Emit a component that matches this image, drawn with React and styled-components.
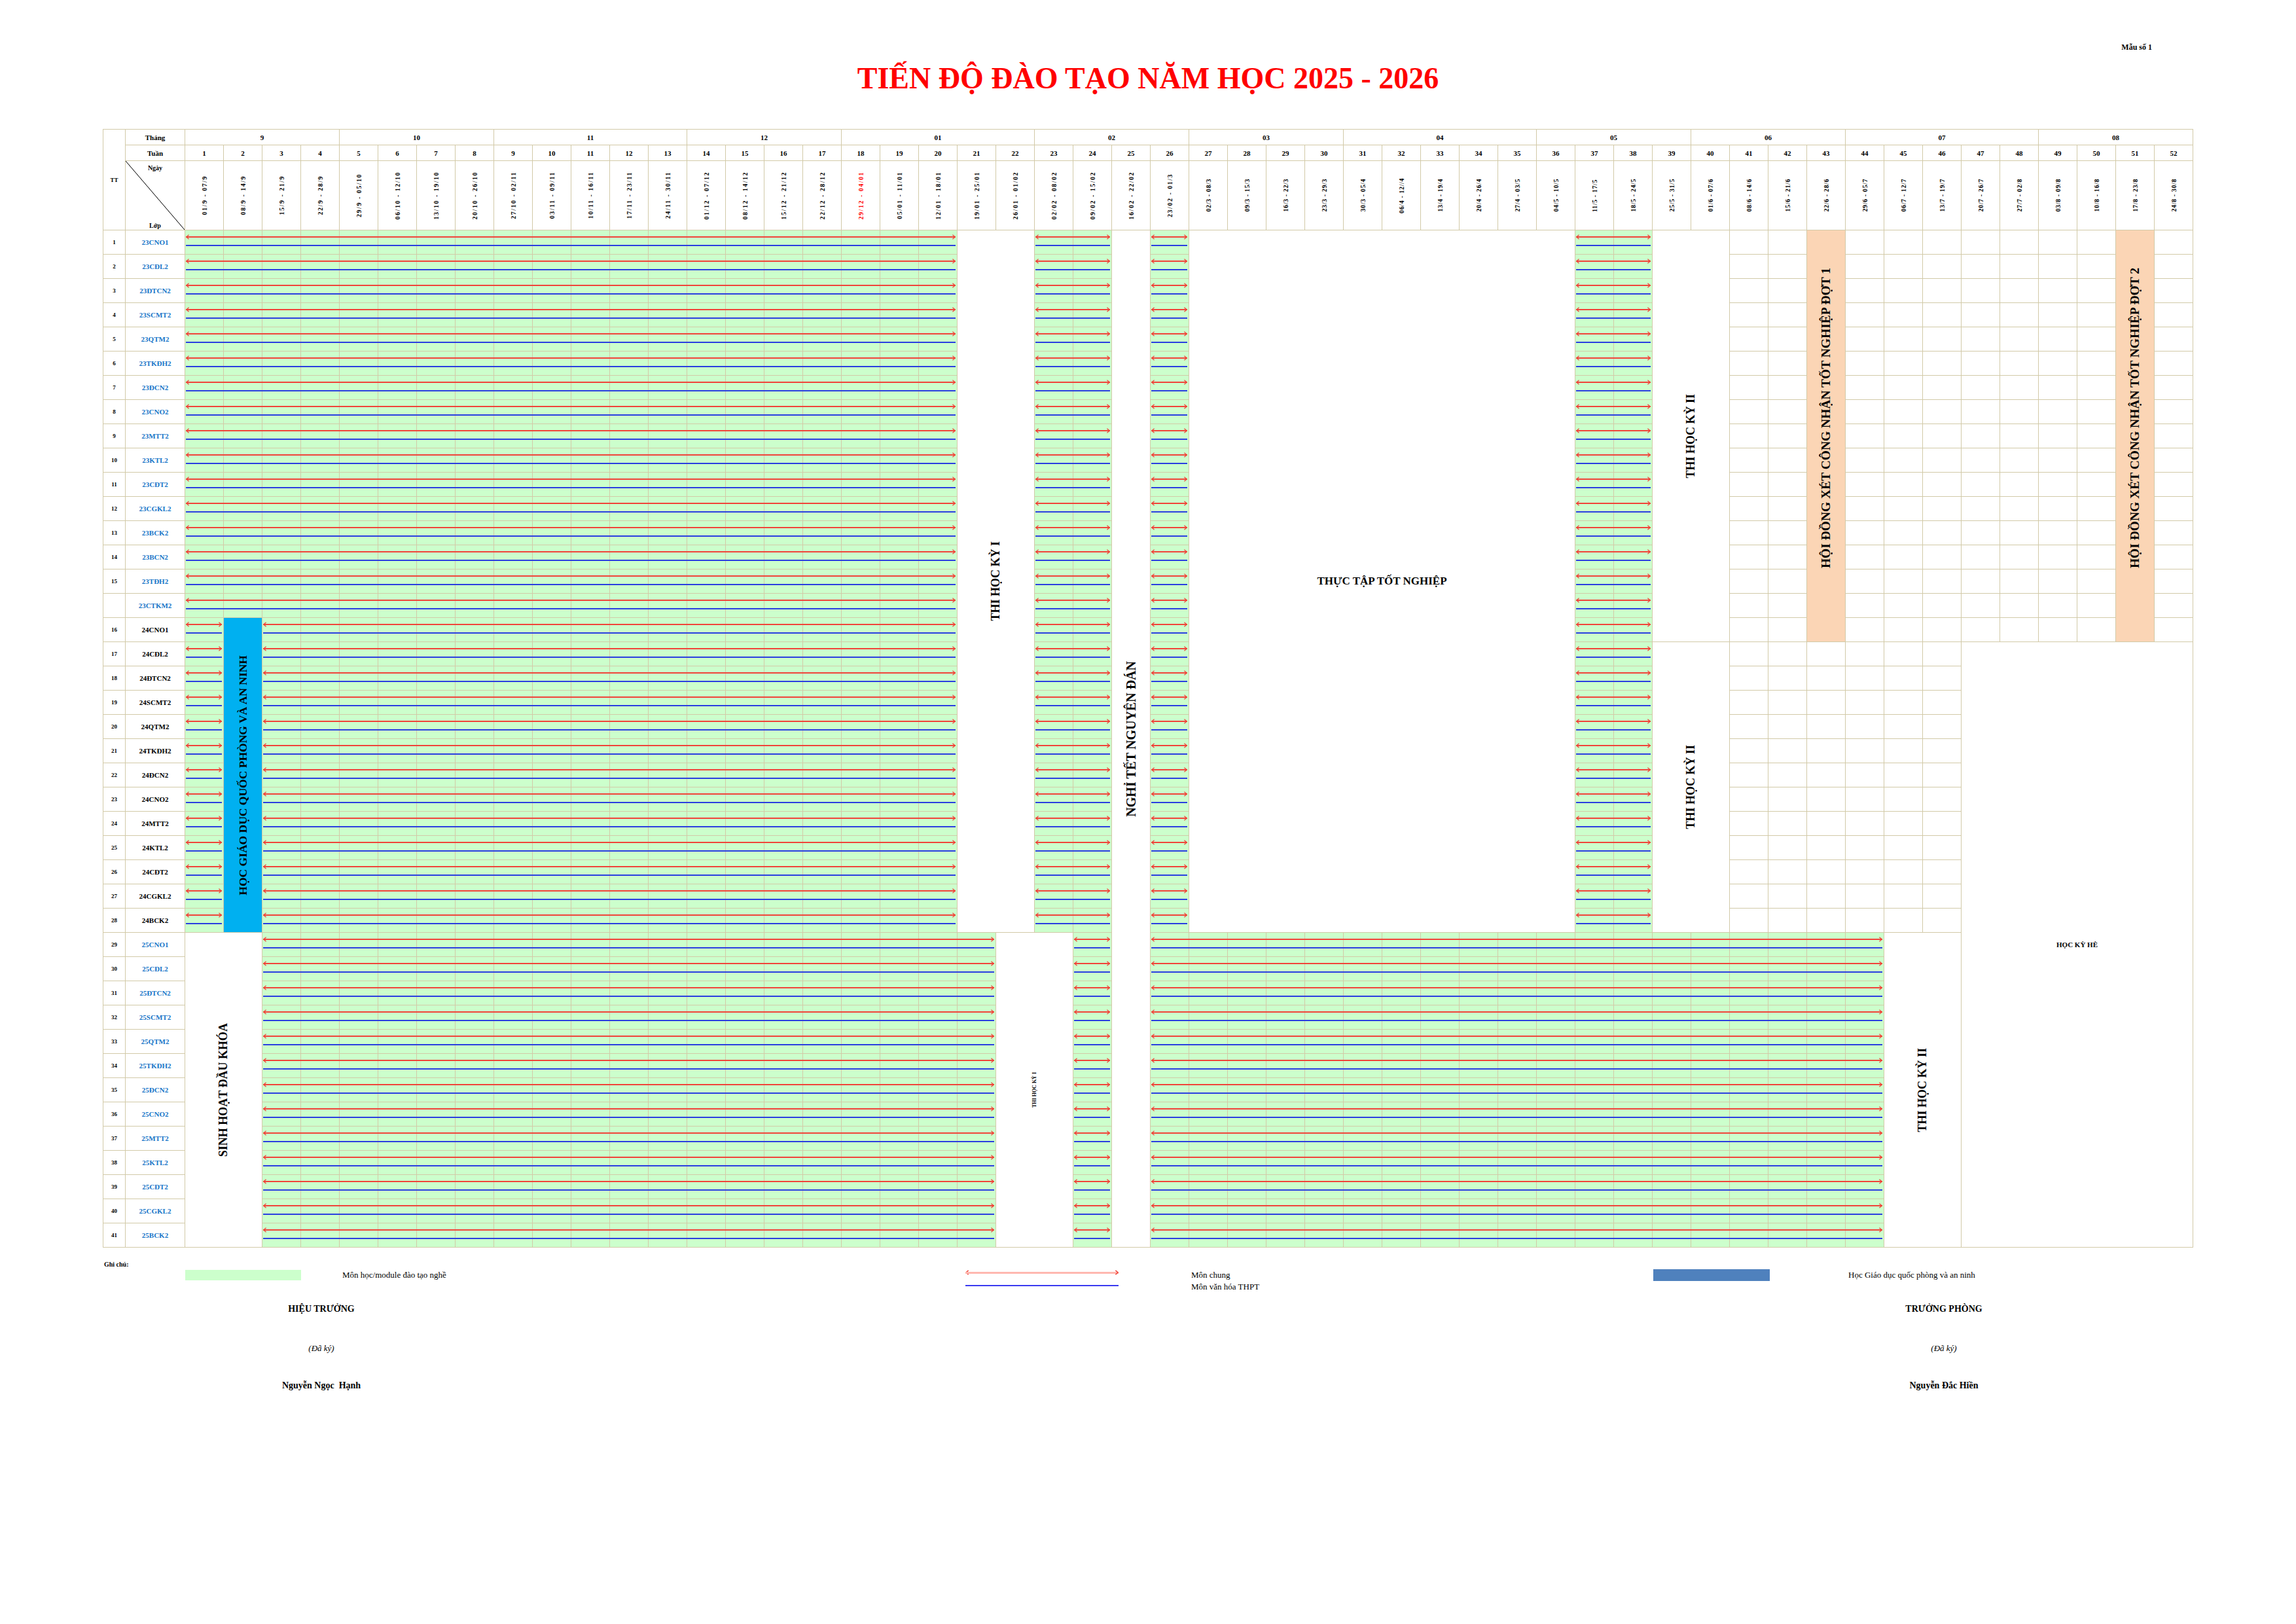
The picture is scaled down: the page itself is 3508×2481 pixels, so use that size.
import React from "react";
import styled, { createGlobalStyle, css } from "styled-components";

const LINE = "#d2caa8";
const GREEN = "#ccffcc";
const RED = "#f0443a";
const BLUE = "#2b3fe0";

const GlobalStyle = createGlobalStyle`
  html, body { margin: 0; padding: 0; background: #fff; }
  body { font-family: "Liberation Serif", "Times New Roman", serif; color: #000; }
`;

const MONTHS = [
  ["9", 4], ["10", 4], ["11", 5], ["12", 4], ["01", 5], ["02", 4],
  ["03", 4], ["04", 5], ["05", 4], ["06", 4], ["07", 5], ["08", 4],
];

const DATES = [
  "01/9 - 07/9", "08/9 - 14/9", "15/9 - 21/9", "22/9 - 28/9", "29/9 - 05/10",
  "06/10 - 12/10", "13/10 - 19/10", "20/10 - 26/10", "27/10 - 02/11", "03/11 - 09/11",
  "10/11 - 16/11", "17/11 - 23/11", "24/11 - 30/11", "01/12 - 07/12", "08/12 - 14/12",
  "15/12 - 21/12", "22/12 - 28/12", "29/12 - 04/01", "05/01 - 11/01", "12/01 - 18/01",
  "19/01 - 25/01", "26/01 - 01/02", "02/02 - 08/02", "09/02 - 15/02", "16/02 - 22/02",
  "23/02 - 01/3", "02/3 - 08/3", "09/3 - 15/3", "16/3 - 22/3", "23/3 - 29/3",
  "30/3 - 05/4", "06/4 - 12//4", "13/4 - 19/4", "20/4 - 26/4", "27/4 - 03/5",
  "04/5 - 10/5", "11/5 - 17/5", "18/5 - 24/5", "25/5 - 31/5", "01/6 - 07/6",
  "08/6 - 14/6", "15/6 - 21/6", "22/6 - 28/6", "29/6 - 05/7", "06/7 - 12/7",
  "13/7 - 19/7", "20/7 - 26/7", "27/7 - 02/8", "03/8 - 09/8", "10/8 - 16/8",
  "17/8 - 23/8", "24/8 - 30/8",
];

const WEEKS = DATES.map((_, i) => i + 1);

const SUFFIXES = ["CNO1", "CĐL2", "ĐTCN2", "SCMT2", "QTM2", "TKĐH2", "ĐCN2", "CNO2", "MTT2", "KTL2", "CĐT2", "CGKL2", "BCK2"];

const ROWS = [
  ...SUFFIXES.map((s, i) => ({ no: String(i + 1), name: "23" + s, group: 23 })),
  { no: "14", name: "23BCN2", group: 23 },
  { no: "15", name: "23TĐH2", group: 23 },
  { no: "", name: "23CTKM2", group: 23 },
  ...SUFFIXES.map((s, i) => ({ no: String(i + 16), name: "24" + s, group: 24 })),
  ...SUFFIXES.map((s, i) => ({ no: String(i + 29), name: "25" + s, group: 25 })),
];

// green study runs per cohort, in weeks
const RUNS = {
  23: [[1, 20], [23, 24], [26, 26], [37, 38]],
  24: [[1, 1], [3, 20], [23, 24], [26, 26], [37, 38]],
  25: [[3, 21], [24, 24], [26, 44]],
};

// merged cells: weeks w1..w2, data rows r1..r2 (0 based)
const BLOCKS = [
  { id: "thi1", w1: 21, w2: 22, r1: 0, r2: 28, label: "THI HỌC KỲ I", size: 18, vertical: true, fill: "white" },
  { id: "tet", w1: 25, w2: 25, r1: 0, r2: 41, label: "NGHỈ TẾT NGUYÊN ĐÁN", size: 20, vertical: true, fill: "white" },
  { id: "tttn", w1: 27, w2: 36, r1: 0, r2: 28, label: "THỰC TẬP TỐT NGHIỆP", size: 17, fill: "white" },
  { id: "thi2a", w1: 39, w2: 40, r1: 0, r2: 16, label: "THI HỌC KỲ II", size: 18, vertical: true, fill: "white" },
  { id: "thi2b", w1: 39, w2: 40, r1: 17, r2: 28, label: "THI HỌC KỲ II", size: 18, vertical: true, fill: "white" },
  { id: "hd1", w1: 43, w2: 43, r1: 0, r2: 16, label: "HỘI ĐỒNG XÉT CÔNG NHẬN TỐT NGHIỆP ĐỢT 1", size: 19.5, vertical: true, fill: "orange", lift: 54 },
  { id: "hd2", w1: 51, w2: 51, r1: 0, r2: 16, label: "HỘI ĐỒNG XÉT CÔNG NHẬN TỐT NGHIỆP ĐỢT 2", size: 19.5, vertical: true, fill: "orange", lift: 54 },
  { id: "he", w1: 47, w2: 52, r1: 17, r2: 41, label: "HỌC KỲ HÈ", size: 11, fill: "white" },
  { id: "qp", w1: 2, w2: 2, r1: 16, r2: 28, label: "HỌC GIÁO DỤC QUỐC PHÒNG VÀ AN NINH", size: 17.5, vertical: true, fill: "sky" },
  { id: "shdk", w1: 1, w2: 2, r1: 29, r2: 41, label: "SINH HOẠT ĐẦU KHÓA", size: 18, vertical: true, fill: "white" },
  { id: "thi1c", w1: 22, w2: 23, r1: 29, r2: 41, label: "THI HỌC KỲ I", size: 8, vertical: true, fill: "white" },
  { id: "thi2c", w1: 45, w2: 46, r1: 29, r2: 41, label: "THI HỌC KỲ II", size: 18, vertical: true, fill: "white" },
];

const FILLS = { white: "#fff", orange: "#fbd5b5", sky: "#00b0f0" };

const isCovered = (r, w) =>
  BLOCKS.some((b) => w >= b.w1 && w <= b.w2 && r >= b.r1 && r <= b.r2);

const Page = styled.div`
  width: 3508px;
  min-height: 2481px;
  padding: 64px 0 0 157px;
  box-sizing: border-box;
`;

const Sheet = styled.div`
  width: 3194px;
`;

const FormNo = styled.div`
  padding-right: 63px;
  text-align: right;
  font-size: 12px;
  font-weight: 700;
  line-height: 16px;
`;

const Title = styled.h1`
  margin: 12px 0 0;
  text-align: center;
  color: #ff0000;
  font-size: 46px;
  font-weight: 700;
  line-height: 56px;
`;

const Table = styled.div`
  display: grid;
  grid-template-columns: 34px 91px repeat(52, 59px);
  grid-template-rows: 24px 24px 106px repeat(42, 37px);
  margin-top: 49px;
  border-top: 1px solid ${LINE};
  border-left: 1px solid ${LINE};
  width: fit-content;
`;

const HeadCell = styled.div`
  display: flex;
  align-items: center;
  justify-content: center;
  box-sizing: border-box;
  border-right: 1px solid ${LINE};
  border-bottom: 1px solid ${LINE};
  font-size: ${(p) => p.$size || 11}px;
  font-weight: 700;
  ${(p) => p.$colSpan && css`grid-column: span ${p.$colSpan};`}
  ${(p) => p.$rowSpan && css`grid-row: span ${p.$rowSpan};`}
`;

const DiagCell = styled.div`
  display: flex;
  flex-direction: column;
  align-items: center;
  justify-content: space-between;
  padding: 5px 0 1px;
  box-sizing: border-box;
  border-right: 1px solid ${LINE};
  border-bottom: 1px solid ${LINE};
  background: linear-gradient(
    to top right,
    transparent calc(50% - 0.8px),
    #000 50%,
    transparent calc(50% + 0.8px)
  );
  font-size: 10px;
  font-weight: 700;
`;

const DateText = styled.span`
  writing-mode: vertical-rl;
  transform: rotate(180deg);
  white-space: nowrap;
  font-size: 10px;
  letter-spacing: ${(p) => (p.$wide ? 1.5 : 0.6)}px;
  color: ${(p) => (p.$alert ? "#ff0000" : "#000")};
`;

const NameCell = styled(HeadCell)`
  color: ${(p) => (p.$group === 24 ? "#000" : "#1775c8")};
`;

const Cell = styled.div`
  display: flex;
  flex-direction: column;
  min-width: 0;
  box-sizing: border-box;
  border-right: 1px solid ${LINE};
  border-bottom: 1px solid ${LINE};
  background: ${(p) => (p.$tone === "green" ? GREEN : "#fff")};
`;

const Arrow = styled.div`
  display: flex;
  align-items: center;
  height: 8px;
  margin: 6px ${(p) => (p.$end ? 2 : -1)}px 0 ${(p) => (p.$start ? 1 : 0)}px;
`;

const Shaft = styled.div`
  flex: 1;
  height: ${(p) => p.$thick || 1.5}px;
  background: ${(p) => p.$color || RED};
`;

const HeadSvg = styled.svg`
  flex: none;
  ${(p) => (p.$dir === "left" ? css`margin-right: -5px;` : css`margin-left: -5px;`)}
`;

const Rule = styled.div`
  height: 1.5px;
  margin: 8px ${(p) => (p.$end ? 2 : -1)}px 0 ${(p) => (p.$start ? 1 : 0)}px;
  background: ${BLUE};
`;

const Block = styled.div`
  grid-column: ${(p) => p.$col} / span ${(p) => p.$w};
  grid-row: ${(p) => p.$row} / span ${(p) => p.$h};
  display: flex;
  align-items: center;
  justify-content: center;
  padding-bottom: ${(p) => p.$lift || 0}px;
  box-sizing: border-box;
  border-right: 1px solid ${LINE};
  border-bottom: 1px solid ${LINE};
  background: ${(p) => FILLS[p.$fill]};
`;

const Label = styled.span`
  white-space: nowrap;
  font-size: ${(p) => p.$size}px;
  font-weight: 700;
  ${(p) =>
    p.$vertical &&
    css`
      writing-mode: vertical-rl;
      transform: rotate(180deg);
    `}
`;

const Notes = styled.div`
  margin-top: 20px;
  padding-left: 2px;
  font-size: 10px;
  font-weight: 700;
  line-height: 12px;
`;

const Legend = styled.div`
  display: grid;
  grid-template-columns: 177px 1015px 234px 817px 178px auto;
  align-items: start;
  margin-top: 1px;
  padding-left: 126px;
`;

const Swatch = styled.div`
  height: ${(p) => (p.$fill === "green" ? 16 : 18)}px;
  margin-top: ${(p) => (p.$fill === "green" ? 1 : 0)}px;
  background: ${(p) => (p.$fill === "green" ? GREEN : "#4f81bd")};
`;

const LegendText = styled.div`
  padding-left: ${(p) => p.$indent}px;
  font-size: 13px;
  line-height: 18px;
`;

const LegendLines = styled.div`
  display: flex;
  flex-direction: column;
`;

const LegendArrow = styled.div`
  display: flex;
  align-items: center;
  height: 8px;
  margin-top: 1px;
`;

const LegendRule = styled.div`
  height: 2px;
  margin-top: 15px;
  background: #3a3af0;
`;

const Signatures = styled.div`
  display: grid;
  grid-template-columns: 200px 200px;
  column-gap: 2279px;
  margin-top: 15px;
  padding-left: 234px;
`;

const SignBlock = styled.div`
  display: flex;
  flex-direction: column;
  align-items: center;
`;

const Role = styled.div`
  font-size: 14px;
  font-weight: 700;
  line-height: 20px;
`;

const Signed = styled.div`
  margin-top: 40px;
  font-size: 13px;
  font-style: italic;
  line-height: 20px;
`;

const Signer = styled.div`
  margin-top: 37px;
  font-size: 14px;
  font-weight: 700;
  line-height: 20px;
  white-space: pre;
`;

const Head = ({ dir, color = RED, weight = 1.3 }) => (
  <HeadSvg $dir={dir} width="5" height="8" viewBox="0 0 5 8">
    <path
      d={dir === "left" ? "M4.6 0.8 L0.8 4 L4.6 7.2" : "M0.4 0.8 L4.2 4 L0.4 7.2"}
      fill="none"
      stroke={color}
      strokeWidth={weight}
    />
  </HeadSvg>
);

const Lines = ({ start, end }) => (
  <>
    <Arrow $start={start} $end={end}>
      {start && <Head dir="left" />}
      <Shaft />
      {end && <Head dir="right" />}
    </Arrow>
    <Rule $start={start} $end={end} />
  </>
);

const ClassRow = ({ row, index }) => {
  const runs = RUNS[row.group];
  return (
    <>
      <HeadCell $size={9}>{row.no}</HeadCell>
      <NameCell $group={row.group}>{row.name}</NameCell>
      {WEEKS.filter((w) => !isCovered(index, w)).map((w) => {
        const run = runs.find(([a, b]) => w >= a && w <= b);
        return (
          <Cell key={w} $tone={run ? "green" : "plain"}>
            {run && <Lines start={w === run[0]} end={w === run[1]} />}
          </Cell>
        );
      })}
    </>
  );
};

export default function App() {
  return (
    <Page>
      <GlobalStyle />
      <Sheet>
        <FormNo>Mẫu số 1</FormNo>
        <Title>TIẾN ĐỘ ĐÀO TẠO NĂM HỌC 2025 - 2026</Title>

        <Table>
          <HeadCell $rowSpan={3} $size={9}>TT</HeadCell>
          <HeadCell>Tháng</HeadCell>
          {MONTHS.map(([m, span]) => (
            <HeadCell key={m} $colSpan={span}>{m}</HeadCell>
          ))}

          <HeadCell>Tuần</HeadCell>
          {WEEKS.map((w) => (
            <HeadCell key={w}>{w}</HeadCell>
          ))}

          <DiagCell>
            <span>Ngày</span>
            <span>Lớp</span>
          </DiagCell>
          {DATES.map((d, i) => (
            <HeadCell key={d}>
              <DateText $alert={i === 17} $wide={i < 26}>{d}</DateText>
            </HeadCell>
          ))}

          {ROWS.map((row, i) => (
            <ClassRow key={row.name} row={row} index={i} />
          ))}

          {BLOCKS.map((b) => (
            <Block
              key={b.id}
              $col={b.w1 + 2}
              $w={b.w2 - b.w1 + 1}
              $row={b.r1 + 4}
              $h={b.r2 - b.r1 + 1}
              $fill={b.fill}
              $lift={b.lift}
            >
              <Label $size={b.size} $vertical={b.vertical}>{b.label}</Label>
            </Block>
          ))}
        </Table>

        <Notes>Ghi chú:</Notes>
        <Legend>
          <Swatch $fill="green" />
          <LegendText $indent={63}>Môn học/module đào tạo nghề</LegendText>
          <LegendLines>
            <LegendArrow>
              <Head dir="left" color="#f0443a" weight={1.4} />
              <Shaft $color="#ffb8b0" $thick={3} />
              <Head dir="right" color="#f0443a" weight={1.4} />
            </LegendArrow>
            <LegendRule />
          </LegendLines>
          <LegendText $indent={111}>
            Môn chung
            <br />
            Môn văn hóa THPT
          </LegendText>
          <Swatch $fill="steel" />
          <LegendText $indent={120}>Học Giáo dục quốc phòng và an ninh</LegendText>
        </Legend>

        <Signatures>
          <SignBlock>
            <Role>HIỆU TRƯỞNG</Role>
            <Signed>(Đã ký)</Signed>
            <Signer>Nguyễn Ngọc  Hạnh</Signer>
          </SignBlock>
          <SignBlock>
            <Role>TRƯỞNG PHÒNG</Role>
            <Signed>(Đã ký)</Signed>
            <Signer>Nguyễn Đắc Hiền</Signer>
          </SignBlock>
        </Signatures>
      </Sheet>
    </Page>
  );
}
